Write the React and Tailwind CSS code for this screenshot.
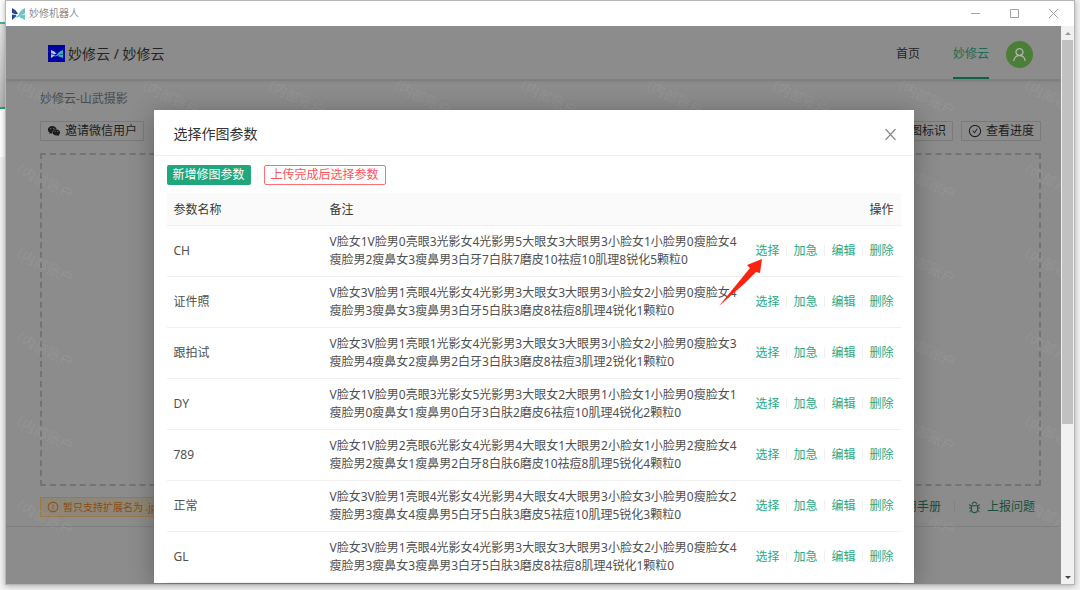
import React from "react";
import { AiFillWechat, AiOutlineBug, AiOutlineCheckCircle, AiOutlineExclamationCircle, AiOutlineUser } from "react-icons/ai";

const params = [
  { name: "CH", remark: ["V脸女1V脸男0亮眼3光影女4光影男5大眼女3大眼男3小脸女1小脸男0瘦脸女4", "瘦脸男2瘦鼻女3瘦鼻男3白牙7白肤7磨皮10祛痘10肌理8锐化5颗粒0"] },
  { name: "证件照", remark: ["V脸女3V脸男1亮眼4光影女4光影男3大眼女3大眼男3小脸女2小脸男0瘦脸女4", "瘦脸男3瘦鼻女3瘦鼻男3白牙5白肤3磨皮8祛痘8肌理4锐化1颗粒0"] },
  { name: "跟拍试", remark: ["V脸女3V脸男1亮眼1光影女4光影男3大眼女3大眼男3小脸女2小脸男0瘦脸女3", "瘦脸男4瘦鼻女2瘦鼻男2白牙3白肤3磨皮8祛痘3肌理2锐化1颗粒0"] },
  { name: "DY", remark: ["V脸女1V脸男0亮眼3光影女5光影男3大眼女2大眼男1小脸女1小脸男0瘦脸女1", "瘦脸男0瘦鼻女1瘦鼻男0白牙3白肤2磨皮6祛痘10肌理4锐化2颗粒0"] },
  { name: "789", remark: ["V脸女1V脸男2亮眼6光影女4光影男4大眼女1大眼男2小脸女1小脸男2瘦脸女4", "瘦脸男2瘦鼻女1瘦鼻男2白牙8白肤6磨皮10祛痘8肌理5锐化4颗粒0"] },
  { name: "正常", remark: ["V脸女3V脸男1亮眼4光影女4光影男4大眼女4大眼男3小脸女3小脸男0瘦脸女2", "瘦脸男3瘦鼻女4瘦鼻男5白牙5白肤3磨皮5祛痘10肌理5锐化3颗粒0"] },
  { name: "GL", remark: ["V脸女3V脸男1亮眼4光影女4光影男3大眼女3大眼男3小脸女2小脸男0瘦脸女4", "瘦脸男3瘦鼻女3瘦鼻男3白牙5白肤3磨皮8祛痘8肌理4锐化1颗粒0"] },
];

const actions = ["选择", "加急", "编辑", "删除"];

function Butterfly({ className, left, right }) {
  return (
    <svg viewBox="0 0 26 24" preserveAspectRatio="none" className={className} aria-hidden="true">
      <path d="M0 0 Q8 3 12 11 L8 13 L0 10 Z" fill={left} />
      <path d="M0 13 L7 14 L9 16 L0 24 Z" fill={left} />
      <path d="M26 0 L26 11 Q20 12 16 16 Q12 20 7 19 Q14 14 16 8 Q19 3 26 0 Z" fill={right} />
      <path d="M19 14 L26 13 L26 24 L14 18 Z" fill={right} />
    </svg>
  );
}

function TitleBar() {
  return (
    <div className="flex h-[25px] shrink-0 items-center justify-between bg-white pl-1.5 pr-4">
      <div className="flex items-center gap-1 text-[10px] text-[#8c8c8c]">
        <Butterfly className="h-3 w-[13px]" left="#24459a" right="#6cc5c8" />
        <span>妙修机器人</span>
      </div>
      <div className="flex items-center gap-[30px] text-[#a3a3a3]">
        <button aria-label="最小化">
          <svg viewBox="0 0 9 9" className="size-[9px]" stroke="currentColor"><path d="M0 4.5h9" /></svg>
        </button>
        <button aria-label="最大化">
          <svg viewBox="0 0 9 9" className="size-[9px]" stroke="currentColor" fill="none"><path d="M.5 .5h8v8h-8z" /></svg>
        </button>
        <button aria-label="关闭窗口">
          <svg viewBox="0 0 9 9" className="size-[9px]" stroke="currentColor"><path d="M0 0l9 9M9 0L0 9" /></svg>
        </button>
      </div>
    </div>
  );
}

function PageHeader() {
  return (
    <header className="flex h-[54px] shrink-0 justify-between border-b border-[#808080] pl-[42px] pr-7 shadow-sm">
      <div className="flex items-center gap-[3px] pt-0.5 text-sm text-[#242424]">
        <span className="flex size-[17px] items-center justify-center bg-[#0003a0]">
          <Butterfly className="h-2 w-3" left="#b9c9dc" right="#35b3b5" />
        </span>
        <span>妙修云 / 妙修云</span>
      </div>
      <nav className="flex text-xs">
        <a href="#home" className="mr-[33px] flex items-center pt-0.5 text-[#262626]">首页</a>
        <a href="#cloud" className="mr-[17px] flex items-center border-b-2 border-[#0d6248] pt-1 text-[#1d6b53]">妙修云</a>
        <button aria-label="账户" className="mt-[15px] flex size-[27px] items-center justify-center rounded-full bg-[#4b7f37] text-[#b4b4b4]">
          <AiOutlineUser className="size-[17px]" />
        </button>
      </nav>
    </header>
  );
}

function ToolButton({ icon, children }) {
  return (
    <button className="flex h-5 items-center gap-1 whitespace-nowrap border border-[#7b7b7b] px-1.5 text-xs text-[#1d1d1d]">
      {icon}
      {children}
    </button>
  );
}

function Workspace() {
  return (
    <main className="flex flex-col border-b border-[#808080] pb-[9px] pl-[34px] pr-5 pt-2.5">
      <div className="text-xs leading-[18px] text-[#4b4b4b]">妙修云-山武摄影</div>
      <div className="mt-[13px] flex justify-between">
        <ToolButton icon={<AiFillWechat className="size-3.5" />}>邀请微信用户</ToolButton>
        <div className="flex gap-2">
          <ToolButton>图标识</ToolButton>
          <ToolButton icon={<AiOutlineCheckCircle className="size-3.5" />}>查看进度</ToolButton>
        </div>
      </div>
      <div className="mt-3 h-[333px] border-2 border-dashed border-[#737373]" />
      <div className="mt-[11px] flex h-5 items-center justify-between">
        <div className="flex h-5 w-[300px] items-center gap-1 border border-[#99774f] bg-[#8e8777] px-1.5 text-[10px] text-[#8c4b12]">
          <AiOutlineExclamationCircle className="size-3" />
          <span>暂只支持扩展名为 .jpg</span>
        </div>
        <div className="flex items-center pr-1.5 text-xs text-[#174f3d]">
          <a href="#manual">使用手册</a>
          <span className="mx-[13px] h-3 w-px bg-[#838383]" />
          <a href="#report" className="flex items-center gap-1.5">
            <AiOutlineBug className="size-[13px]" />
            上报问题
          </a>
        </div>
      </div>
    </main>
  );
}

// only the cells that the dialog leaves free carry a mark
function Watermark() {
  return (
    <div aria-hidden="true" className="pointer-events-none absolute inset-0 grid auto-rows-[84px] grid-cols-[repeat(9,126px)] overflow-hidden pl-2 pt-[46px] text-sm text-white/8 select-none">
      {Array.from({ length: 54 }, (_, i) => (
        <span key={i} className="origin-top-left rotate-[26deg] whitespace-nowrap">
          {(i < 9 || [0, 7, 8].includes(i % 9)) && "（内部账户"}
        </span>
      ))}
    </div>
  );
}

function ParamsDialog() {
  return (
    <section role="dialog" aria-label="选择作图参数" className="w-full max-w-[760px] bg-white shadow-[0_4px_24px_rgba(0,0,0,0.3)]">
      <div className="flex h-[46px] items-center justify-between border-b border-[#f0f0f0] px-5">
        <h2 className="pt-0.5 text-sm text-[#333]">选择作图参数</h2>
        <button aria-label="关闭" className="-mr-0.5 text-[#858585]">
          <svg viewBox="0 0 11 11" className="mt-1 size-[11px]" stroke="currentColor" strokeWidth="1.2"><path d="M.5 0l10 11M10.5 0L.5 11" /></svg>
        </button>
      </div>
      <div className="px-[13px] pt-[9px] text-xs">
        <div className="flex items-center">
          <button className="h-5 rounded-[2px] bg-[#20a67c] px-1.5 text-white">新增修图参数</button>
          <span className="mx-1.5 h-3 w-px bg-[#f3f3f3]" />
          <button className="h-5 rounded-[2px] border border-[#ff6f72] px-1.5 text-[#ff5257]">上传完成后选择参数</button>
        </div>
        <table className="mt-2 w-full table-fixed text-left text-[#505050]">
          <thead>
            <tr className="h-8 border-b border-[#f0f0f0] bg-[#fafafa] text-[#383838]">
              <th className="w-[156px] px-[7px] pt-0.5 font-normal">参数名称</th>
              <th className="px-[7px] pt-0.5 font-normal">备注</th>
              <th className="w-[152px] px-[7px] pt-0.5 text-right font-normal">操作</th>
            </tr>
          </thead>
          <tbody>
            {params.map((item) => (
              <tr key={item.name} className="border-b border-[#f0f0f0]">
                <td className="px-[7px]">{item.name}</td>
                <td className="whitespace-nowrap px-[7px] py-[7px] leading-[18px]">
                  {item.remark[0]}
                  <br />
                  {item.remark[1]}
                </td>
                <td className="px-[7px]">
                  <div className="flex items-center justify-between text-[#2ba982]">
                    {actions.map((action, i) => (
                      <React.Fragment key={action}>
                        {i > 0 && <span className="h-[11px] w-px bg-[#f0f0f0]" />}
                        <a href="#params">{action}</a>
                      </React.Fragment>
                    ))}
                  </div>
                </td>
              </tr>
            ))}
          </tbody>
        </table>
      </div>
    </section>
  );
}

function Scrollbar() {
  return (
    <div className="flex w-[13px] shrink-0 flex-col items-center bg-[#f1f1f1]">
      <svg viewBox="0 0 13 14" className="h-3.5 w-[13px]"><path d="M4 9l3-3 3 3z" fill="#999" /></svg>
      <div className="h-[384px] w-[11px] bg-[#c1c1c1]" />
      <svg viewBox="0 0 13 14" className="mt-auto h-3.5 w-[13px]"><path d="M4 6l3 3 3-3z" fill="#444" /></svg>
    </div>
  );
}

export default function App() {
  return (
    <div className="flex h-screen overflow-hidden bg-[#f2f2f2] pb-[5px] pr-[5px] font-['Noto_Sans','Noto_Sans_CJK_SC',sans-serif]">
      <div className="flex w-[5px] shrink-0 flex-col">
        <div className="h-[22px] bg-white" />
        <div className="h-0.5 bg-[#45b892]" />
        <div className="h-[83px] bg-gradient-to-b from-[#e4e4e4] to-[#b5b5b5]" />
        <div className="h-0.5 bg-[#20a67c]" />
        <div className="h-[48px] bg-white" />
      </div>
      <div className="flex min-w-0 flex-1 flex-col border border-[#b5b5b5] shadow-[0_1px_6px_rgba(0,0,0,0.3)]">
        <TitleBar />
        <div className="flex min-h-0 flex-1">
          <div className="relative min-w-0 flex-1 overflow-hidden bg-[#8c8c8c]">
            <PageHeader />
            <Workspace />
            <Watermark />
            <div className="absolute inset-0 flex items-start justify-center pt-[84px]">
              <ParamsDialog />
              <svg viewBox="0 0 46 50" className="absolute left-1/2 top-[231px] ml-[184px] h-[50px] w-[46px]" aria-hidden="true">
                <path d="M1 49 L32 11 L29 8 L44 2 L42 16 L38 15 L26 27 Z" fill="#fb2310" />
              </svg>
            </div>
          </div>
          <Scrollbar />
        </div>
      </div>
    </div>
  );
}
